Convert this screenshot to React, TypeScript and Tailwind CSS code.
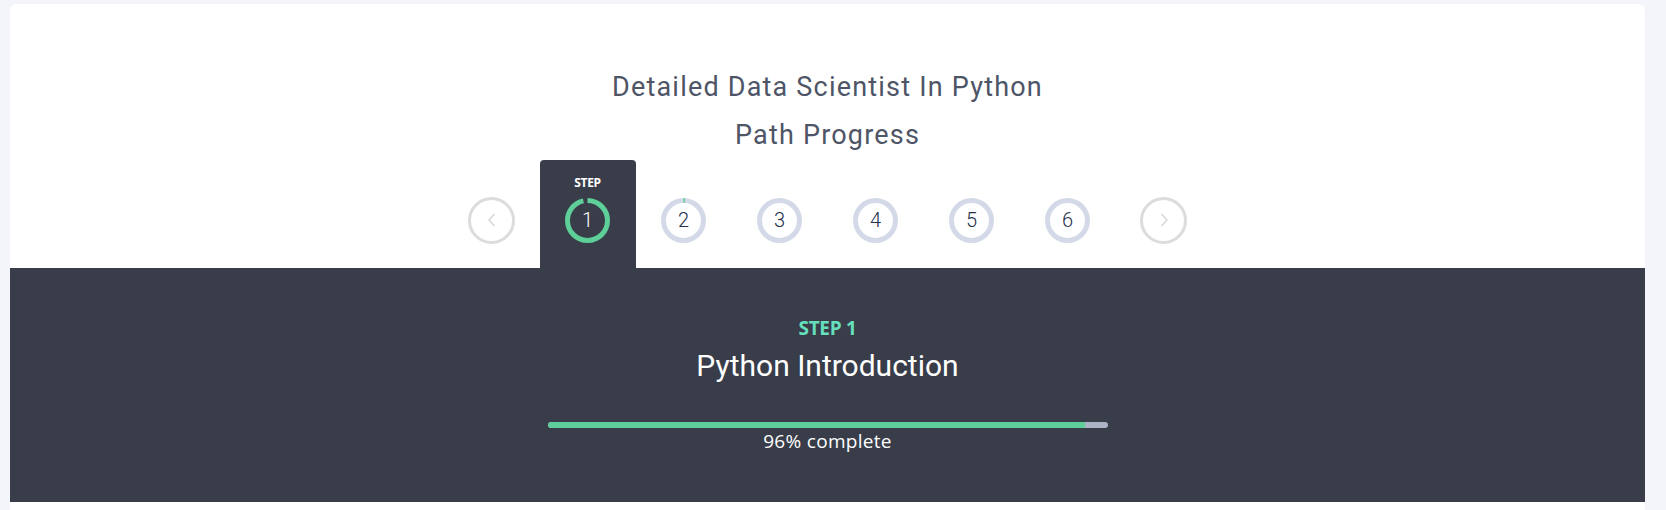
import React from "react";

const steps = [
  { n: 1, progress: 0.96 },
  { n: 2, progress: 0.012 },
  { n: 3, progress: 0 },
  { n: 4, progress: 0 },
  { n: 5, progress: 0 },
  { n: 6, progress: 0 },
];

function Ring({ n, progress, active }: { n: number; progress: number; active: boolean }) {
  const r = 20;
  const c = 2 * Math.PI * r;
  return (
    <div className="relative w-[45px] h-[45px] flex items-center justify-center">
      <svg width="45" height="45" viewBox="0 0 45 45" className="absolute inset-0">
        {!active && <circle cx="22.5" cy="22.5" r={r} fill="none" stroke="#d3d9e7" strokeWidth="5" />}
        {progress > 0 && (
          <circle
            cx="22.5"
            cy="22.5"
            r={r}
            fill="none"
            stroke="#5ecf98"
            strokeWidth="5"
            strokeDasharray={`${c * progress} ${c}`}
            transform="rotate(-90 22.5 22.5)"
          />
        )}
      </svg>
      <span
        className={`relative text-[20px] leading-none font-light ${active ? "text-white" : "text-[#22304a]"}`}
        style={{ fontFamily: "Roboto, 'Noto Sans', sans-serif" }}
      >
        {n}
      </span>
    </div>
  );
}

function NavCircle({ dir }: { dir: "left" | "right" }) {
  return (
    <div className="w-[47px] h-[47px] rounded-full border-[3px] border-[#dcdcdc] flex items-center justify-center">
      <svg width="10" height="14" viewBox="0 0 10 14">
        {dir === "left" ? (
          <path d="M7.5 1 L2 7 L7.5 13" fill="none" stroke="#d5d5d5" strokeWidth="1.4" />
        ) : (
          <path d="M2.5 1 L8 7 L2.5 13" fill="none" stroke="#d5d5d5" strokeWidth="1.4" />
        )}
      </svg>
    </div>
  );
}

function Slot({ children, active }: { children: React.ReactNode; active?: boolean }) {
  return (
    <div
      className={`w-[96px] h-[108px] flex flex-col items-center ${active ? "bg-[#383d49] rounded-t-[4px]" : ""}`}
    >
      <div
        className={`mt-[16px] h-[14px] text-[12px] leading-[14px] font-bold tracking-[-0.3px] ${active ? "text-white" : "text-transparent"}`}
        style={{ fontFamily: "'Open Sans', 'Noto Sans', sans-serif" }}
      >
        STEP
      </div>
      <div className="mt-[6px] h-[48px] flex items-center justify-center">{children}</div>
    </div>
  );
}

export default function App() {
  return (
    <div className="min-h-[510px] bg-[#f4f5fa] pt-[4px] pl-[10px] overflow-hidden">
      <div className="w-[1635px] h-[506px] bg-white rounded-t-[6px] flex flex-col">
        <div className="pt-[59px] flex flex-col items-center text-[#4e5566]" style={{ fontFamily: "Roboto, 'Noto Sans', sans-serif" }}>
          <div className="text-[27px] leading-[48px] tracking-[1.2px]">Detailed Data Scientist In Python</div>
          <div className="text-[27px] leading-[48px] tracking-[1.2px]">Path Progress</div>
        </div>
        <div className="mt-[1px] flex justify-center">
          <Slot>
            <NavCircle dir="left" />
          </Slot>
          {steps.map((s) => (
            <Slot key={s.n} active={s.n === 1}>
              <Ring n={s.n} progress={s.progress} active={s.n === 1} />
            </Slot>
          ))}
          <Slot>
            <NavCircle dir="right" />
          </Slot>
        </div>
        <div className="h-[234px] bg-[#383d49] flex flex-col items-center pt-[48px]">
          <div
            className="text-[19px] leading-[24px] font-bold text-[#66dfbd] tracking-[-0.3px]"
            style={{ fontFamily: "'Open Sans', 'Noto Sans', sans-serif" }}
          >
            STEP 1
          </div>
          <div
            className="mt-[6px] text-[30px] leading-[40px] text-white tracking-[0px]"
            style={{ fontFamily: "Roboto, 'Noto Sans', sans-serif" }}
          >
            Python Introduction
          </div>
          <div className="mt-[36px] w-[560px] h-[6px] rounded-full bg-[#adb3c6] overflow-hidden">
            <div className="h-full bg-[#5ecf98] rounded-l-full" style={{ width: "96%" }} />
          </div>
          <div
            className="mt-[0px] text-[19px] leading-[26px] text-white tracking-[0.3px]"
            style={{ fontFamily: "'Open Sans', 'Noto Sans', sans-serif" }}
          >
            96% complete
          </div>
        </div>
      </div>
    </div>
  );
}
